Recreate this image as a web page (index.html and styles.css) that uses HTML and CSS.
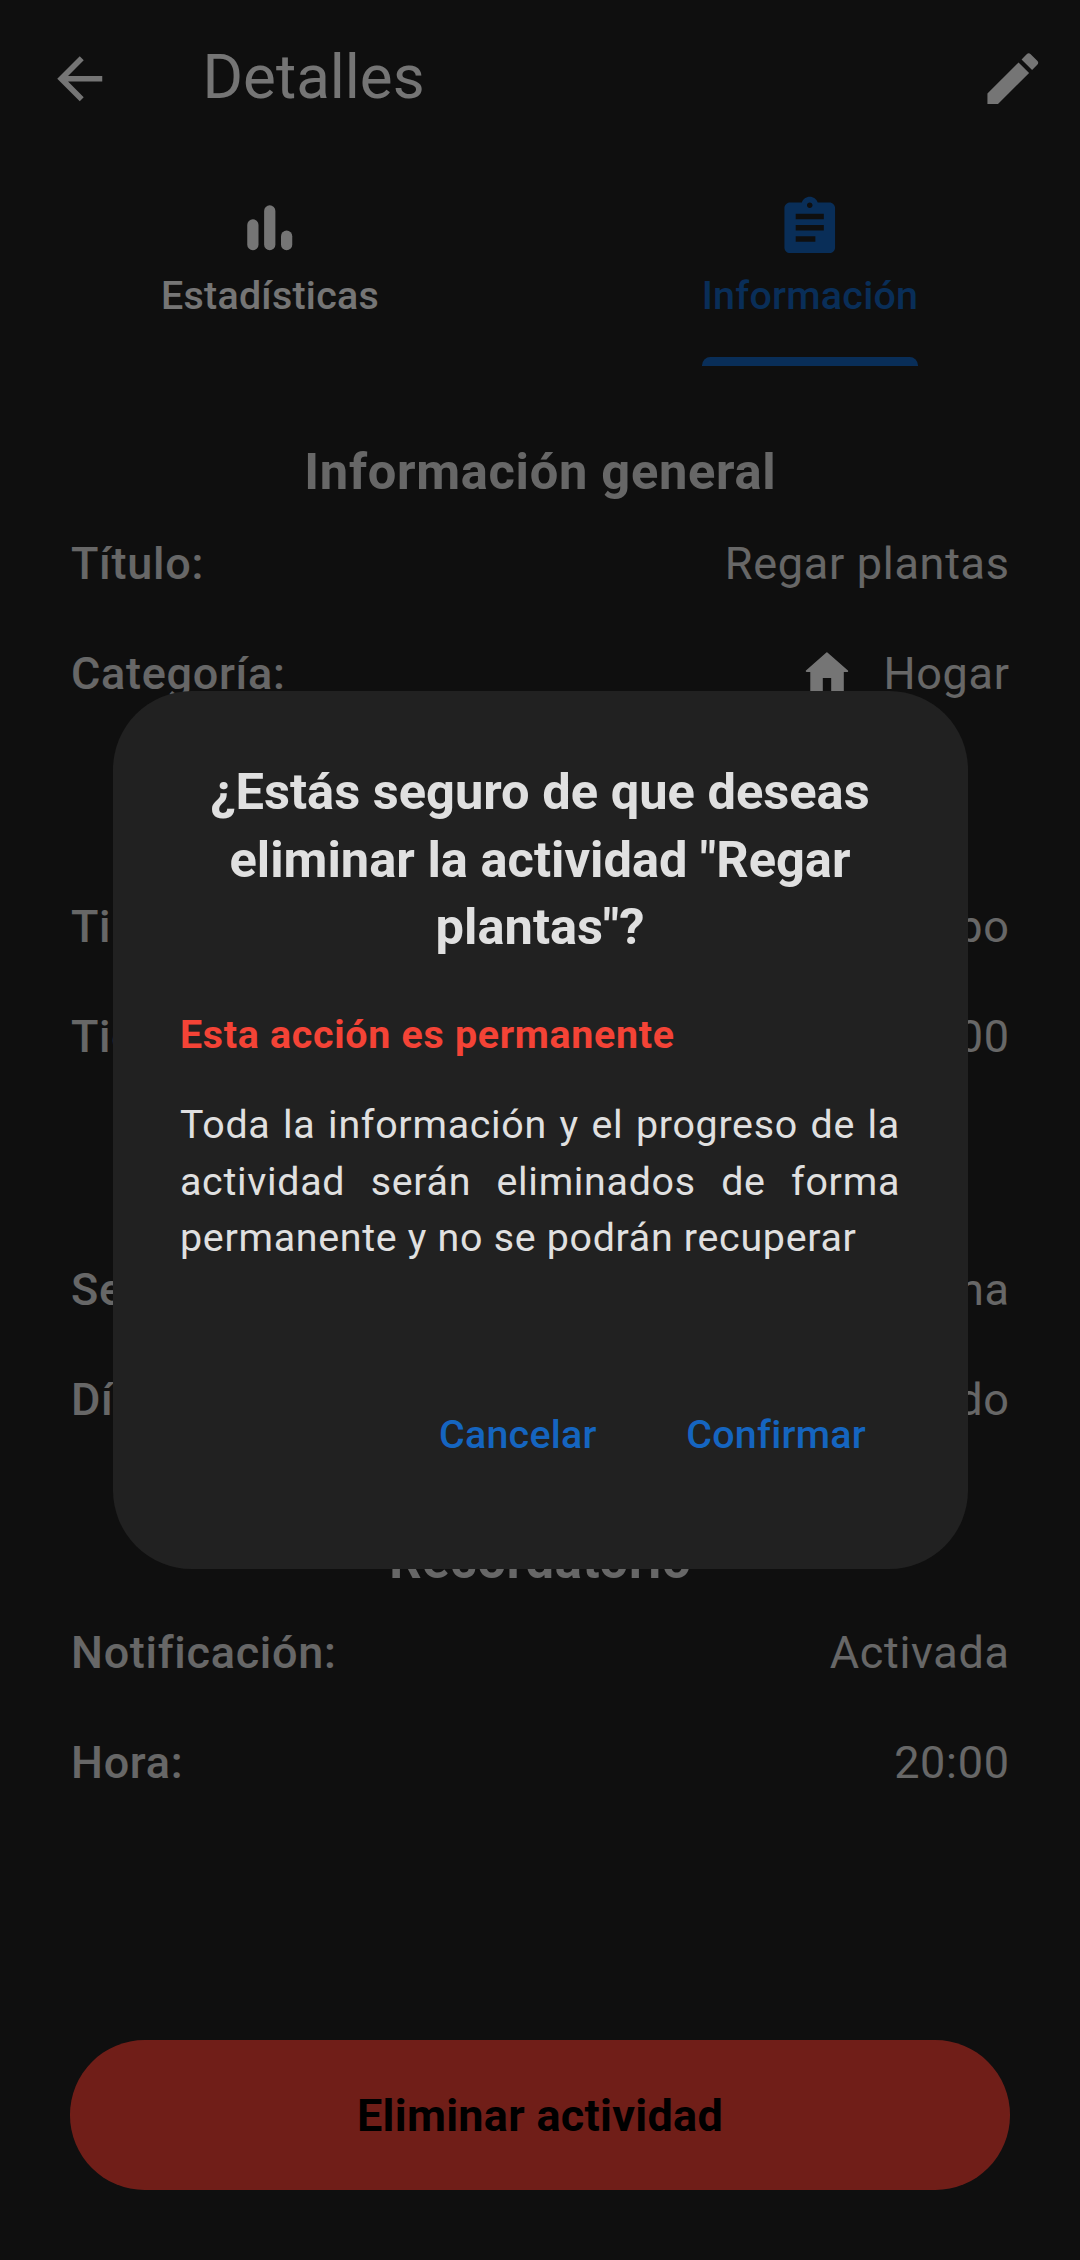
FILE: index.html
```html
<!DOCTYPE html>
<html lang="es">
<head>
<meta charset="utf-8">
<title>Detalles</title>
<link rel="stylesheet" href="styles.css">
</head>
<body>
<div class="screen">
  <header class="app-bar">
    <svg class="icon" viewBox="0 0 24 24"><path d="M20 11H7.83l5.59-5.59L12 4l-8 8 8 8 1.41-1.41L7.83 13H20v-2z"/></svg>
    <h1 class="app-title">Detalles</h1>
    <svg class="icon" viewBox="0 0 24 24"><path d="M3 17.25V21h3.75L17.81 9.94l-3.75-3.75L3 17.25zM20.71 7.04a1 1 0 0 0 0-1.41l-2.34-2.34a1 1 0 0 0-1.41 0l-1.83 1.83 3.75 3.75 1.83-1.83z"/></svg>
  </header>
  <nav class="tabs">
    <div class="tab">
      <svg class="icon" viewBox="0 0 24 24"><rect x="4" y="9" width="4" height="11" rx="2"/><rect x="10" y="4" width="4" height="16" rx="2"/><rect x="16" y="13" width="4" height="7" rx="2"/></svg>
      <span class="tab-label">Estadísticas</span>
    </div>
    <div class="tab tab-active">
      <svg class="icon" viewBox="0 0 24 24"><path d="M19 3h-4.18C14.4 1.84 13.3 1 12 1c-1.3 0-2.4.84-2.82 2H5c-1.1 0-2 .9-2 2v14c0 1.1.9 2 2 2h14c1.1 0 2-.9 2-2V5c0-1.1-.9-2-2-2zm-7 0c.55 0 1 .45 1 1s-.45 1-1 1-1-.45-1-1 .45-1 1-1zm2 14H7v-2h7v2zm3-4H7v-2h10v2zm0-4H7V7h10v2z"/></svg>
      <span class="tab-label">Información</span>
    </div>
  </nav>
  <main class="content">
    <section class="group">
      <h2 class="group-title">Información general</h2>
      <div class="row"><span class="label">Título:</span><span class="value">Regar plantas</span></div>
      <div class="row"><span class="label">Categoría:</span><span class="value value-icon">
        <svg class="home" viewBox="0 0 46 46"><path d="M22.9 2.2 43.4 20.1H39v21.6H28V26.2H18v15.5H7.1V20.1H2.5z"/></svg>Hogar</span></div>
    </section>
    <section class="group group-untitled">
      <div class="row"><span class="label">Tipo:</span><span class="value">Tiempo</span></div>
      <div class="row"><span class="label">Tiempo:</span><span class="value">00:00</span></div>
    </section>
    <section class="group group-untitled">
      <div class="row"><span class="label">Se repite:</span><span class="value">Semana</span></div>
      <div class="row"><span class="label">Días:</span><span class="value">Sábado</span></div>
    </section>
    <section class="group">
      <h2 class="group-title">Recordatorio</h2>
      <div class="row"><span class="label">Notificación:</span><span class="value">Activada</span></div>
      <div class="row"><span class="label">Hora:</span><span class="value">20:00</span></div>
    </section>
  </main>
  <button class="delete">Eliminar actividad</button>
</div>
<div class="scrim">
  <div class="dialog" role="dialog">
    <h2 class="dialog-title">¿Estás seguro de que deseas eliminar la actividad "Regar plantas"?</h2>
    <p class="warning">Esta acción es permanente</p>
    <p class="message">Toda la información y el progreso de la actividad serán eliminados de forma permanente y no se podrán recuperar</p>
    <div class="actions">
      <button class="action">Cancelar</button>
      <button class="action">Confirmar</button>
    </div>
  </div>
</div>
</body>
</html>
```
FILE: styles.css
```css
* { box-sizing: border-box; }

body {
  margin: 0;
  background: #212121;
  color: #e0e0e0;
  font-family: Roboto, sans-serif;
}

h1, h2, p { margin: 0; }

button {
  border: 0;
  margin: 0;
  padding: 0;
  background: none;
  font-family: inherit;
}

.icon {
  display: block;
  flex: none;
  width: 67.5px;
  height: 67.5px;
  fill: currentColor;
}

.screen {
  display: flex;
  flex-direction: column;
  height: 2260px;
  padding-bottom: 70px;
}

.app-bar {
  display: flex;
  align-items: center;
  height: 157.5px;
  padding: 0 33.75px 0 45.5px;
  color: #fff;
}

.app-title {
  flex: 1;
  padding: 0 0 4px 89.5px;
  font-size: 61.875px;
  font-weight: 400;
  line-height: 72px;
}

.tabs {
  display: grid;
  grid-template-columns: 1fr 1fr;
  justify-items: center;
  height: 208.1px;
  padding-top: 36.8px;
  color: #fff;
}

.tab {
  display: flex;
  flex-direction: column;
  align-items: center;
}

.tab-label {
  margin-top: 11.7px;
  font-size: 39.375px;
  font-weight: 500;
  letter-spacing: 0.28px;
  line-height: 46px;
}

.tab-active { color: #1565c0; }

.tab-active::after {
  content: "";
  width: 100%;
  height: 8.4px;
  margin-top: auto;
  border-radius: 8.4px 8.4px 0 0;
  background: currentColor;
}

.content {
  display: flex;
  flex-direction: column;
  gap: 104.9px;
  padding: 76px 70.3px 0 71px;
}

.group-title {
  margin-bottom: 35.4px;
  font-size: 50.625px;
  font-weight: 700;
  letter-spacing: 0.703px;
  line-height: 60px;
  text-align: center;
}

.group-untitled { padding-top: 95.4px; }

.row {
  display: flex;
  justify-content: space-between;
  font-size: 45px;
  letter-spacing: 0.703px;
  line-height: 53px;
}

.row + .row { margin-top: 56.7px; }

.label { font-weight: 500; }

.value-icon {
  display: flex;
  align-items: center;
  gap: 33.5px;
}

.home {
  width: 46px;
  height: 46px;
  margin-top: 2px;
  fill: #fff;
  stroke: #fff;
  stroke-width: 1.6;
  stroke-linejoin: round;
}

.delete {
  height: 149.6px;
  margin: auto 70.3px 0;
  border-radius: 74.8px;
  background: #f44336;
  color: #000;
  font-size: 45px;
  font-weight: 700;
  letter-spacing: 0.28px;
}

.scrim {
  position: fixed;
  inset: 0;
  display: flex;
  align-items: center;
  justify-content: center;
  background: rgba(0, 0, 0, 0.54);
}

.dialog {
  width: 855px;
  height: 877.6px;
  padding: 66.8px 67.5px 0;
  border-radius: 78.75px;
  background: #212121;
}

.dialog-title {
  font-size: 50.625px;
  font-weight: 700;
  line-height: 67.5px;
  text-align: center;
}

.warning,
.message {
  font-size: 39.375px;
  letter-spacing: 0.703px;
  line-height: 56.25px;
}

.warning {
  margin-top: 46px;
  color: #f44336;
  font-weight: 700;
}

.message {
  margin-top: 34.5px;
  text-align: justify;
}

.actions {
  display: flex;
  justify-content: flex-end;
  gap: 89.5px;
  margin-top: 140.7px;
  padding-right: 34px;
}

.action {
  color: #1565c0;
  font-size: 39.375px;
  font-weight: 500;
  letter-spacing: 0.28px;
  line-height: 56.25px;
}
```
